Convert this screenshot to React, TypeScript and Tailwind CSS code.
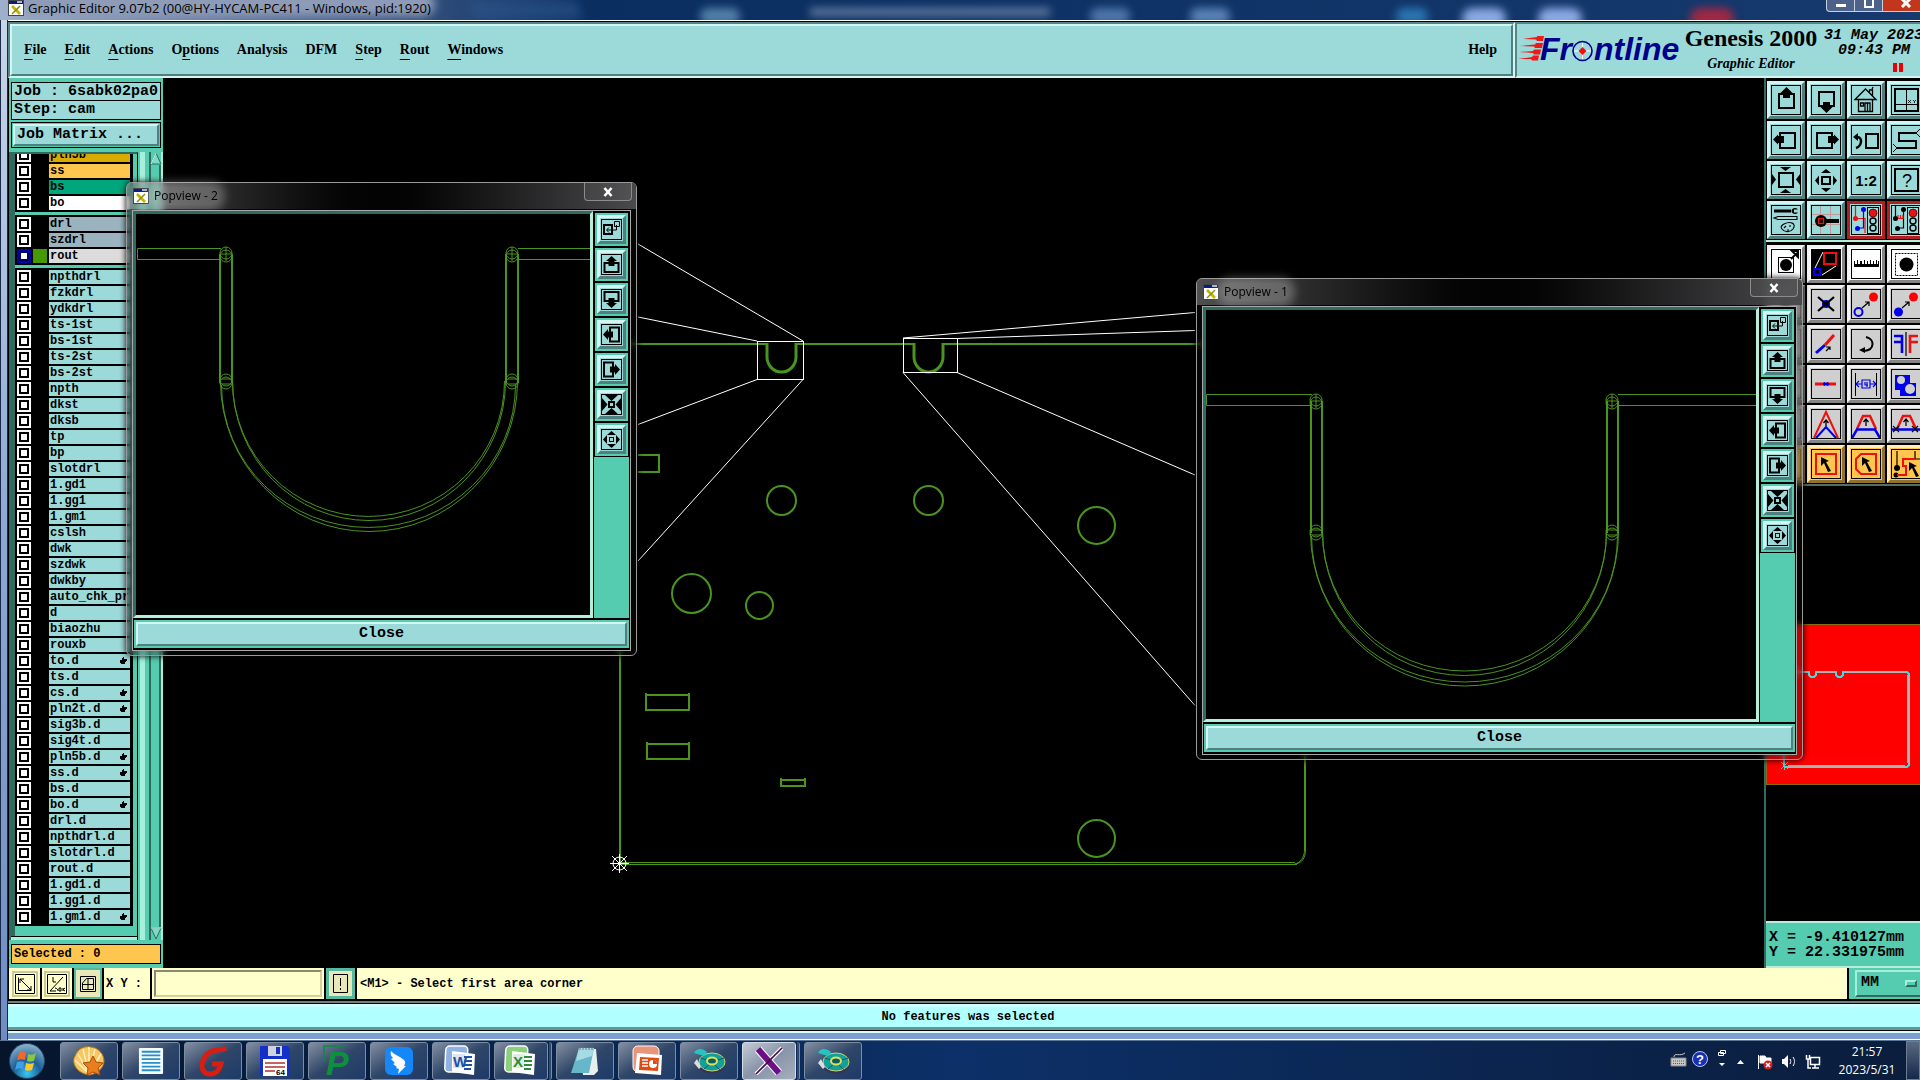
import { useState } from 'react';
import type { ReactNode } from 'react';
import clsx from 'clsx';

const RAISED = 'border-t-[#d3f5f3] border-l-[#d3f5f3] border-r-[#4f8080] border-b-[#4f8080]';
const RAISED_GRAY = 'border-t-[#f2f2f2] border-l-[#f2f2f2] border-r-[#858585] border-b-[#858585]';
const RAISED_ORANGE = 'border-t-[#ffedc2] border-l-[#ffedc2] border-r-[#94712b] border-b-[#94712b]';

const MONO = 'font-["Liberation_Mono",monospace] font-bold';
const SERIF = 'font-["Liberation_Serif",serif] font-bold';
const UI = 'font-["Open_Sans","Noto_Sans",sans-serif]';

const menus = [
  { pre: '', key: 'F', rest: 'ile' },
  { pre: '', key: 'E', rest: 'dit' },
  { pre: '', key: 'A', rest: 'ctions' },
  { pre: 'O', key: 'p', rest: 'tions' },
  { pre: 'Analysis', key: '', rest: '' },
  { pre: 'DFM', key: '', rest: '' },
  { pre: '', key: 'S', rest: 'tep' },
  { pre: '', key: 'R', rest: 'out' },
  { pre: '', key: 'W', rest: 'indows' },
];

interface Layer {
  name: string;
  color?: string;
  hand?: boolean;
  active?: boolean;
}

const plain = (names: string): Layer[] =>
  names.split(' ').map((n) => ({ name: n.replace('*', ''), hand: n.endsWith('*') }));

const layerGroups: Layer[][] = [
  [
    { name: 'pln5b', color: 'bg-[#d9ab00]' },
    { name: 'ss', color: 'bg-[#ffc64f]' },
    { name: 'bs', color: 'bg-[#00a67c]' },
    { name: 'bo', color: 'bg-white' },
  ],
  [
    { name: 'drl', color: 'bg-[#9ab3bf]' },
    { name: 'szdrl', color: 'bg-[#9ab3bf]' },
    { name: 'rout', color: 'bg-[#dcdcdc]', active: true },
  ],
  plain(
    'npthdrl fzkdrl ydkdrl ts-1st bs-1st ts-2st bs-2st npth dkst dksb tp bp slotdrl 1.gd1 1.gg1 1.gm1 cslsh dwk szdwk dwkby auto_chk_pr d biaozhu rouxb to.d* ts.d cs.d* pln2t.d* sig3b.d sig4t.d pln5b.d* ss.d* bs.d bo.d* drl.d npthdrl.d slotdrl.d rout.d 1.gd1.d 1.gg1.d 1.gm1.d*'
  ),
];

function LayerRow({ layer }: { layer: Layer }) {
  const [checked, setChecked] = useState(false);
  return (
    <li className="flex h-4 items-start">
      <label className="flex h-[14px] w-full items-start">
        <span className={clsx('ml-[2px] block size-[14px] p-[2px]', layer.active ? 'bg-[#0000a8]' : 'bg-white')}>
          <input
            type="checkbox"
            checked={checked}
            onChange={() => setChecked(!checked)}
            className={clsx(
              'block size-[10px] appearance-none border-2 bg-white',
              layer.active ? 'border-[#000058]' : 'border-black'
            )}
          />
        </span>
        <span className={clsx('ml-[2px] h-[14px] w-[14px]', layer.active && 'bg-[#449a00]')} />
        <span
          className={clsx(
            'ml-[2px] flex h-[14px] w-[81px] items-center justify-between overflow-hidden pl-px text-[12px] leading-[14px] whitespace-nowrap',
            layer.color ?? 'bg-[#9cdada]'
          )}
        >
          {layer.name}
          {layer.hand && (
            <svg width="9" height="8" viewBox="0 0 9 8" className="mr-[2px] shrink-0" aria-hidden="true">
              <path d="M4 0h1v2h3v2H7v1H6v2H2V6H1V3h2V1h1z" />
            </svg>
          )}
        </span>
      </label>
    </li>
  );
}

function AppIcon() {
  return (
    <svg width="16" height="16" viewBox="0 0 16 16" className="shrink-0" aria-hidden="true">
      <rect x="0.5" y="0.5" width="15" height="15" fill="#fff" stroke="#444" />
      <rect x="1" y="1" width="14" height="3" fill="#0a1a8c" />
      <rect x="9" y="1" width="5" height="2" fill="#9fb4e0" />
      <path d="M4 6l8 8" stroke="#c0b400" strokeWidth="2.6" />
      <path d="M12 6l-8 8" stroke="#8a8410" strokeWidth="1.4" />
    </svg>
  );
}

function FrontlineLogo() {
  return (
    <svg width="165" height="40" viewBox="0 0 165 40" className="shrink-0 overflow-visible" role="img" aria-label="Frontline">
      <path
        d="M5 4l14-2v-1h7l-1 5h-6l-1-1.500zM2 11l15-1.500 1-1.500h7l-1 5h-7l-1-1.500zM1 17l14-1 1-1.500h7l-1 5h-6l-1-1.500zM0 24l14-2 1-1.500h6l-1 5h-6l-1-1.500z"
        fill="#f01818"
      />
      <g fill="#00008b" fontFamily="Liberation Sans, sans-serif" fontWeight="bold" fontStyle="italic" fontSize="32">
        <text x="22" y="25">Fr</text>
        <text x="76" y="25">ntline</text>
      </g>
      <circle cx="64.500" cy="16" r="9.500" fill="none" stroke="#00008b" strokeWidth="1.600" />
      <path d="M64.500 8v16M56 16h17" stroke="#fff" strokeWidth="1" />
      <path d="M64.500 12l4 4-4 4-4-4z" fill="#f01010" />
    </svg>
  );
}

/* ---------- tool glyphs, drawn on a 30px grid ---------- */

const K = { fill: 'none', stroke: '#000', strokeWidth: 2 };
const R = { fill: 'none', stroke: '#ee1010', strokeWidth: 2 };
const B = { fill: 'none', stroke: '#0000ee', strokeWidth: 2 };

function Lights({ x }: { x: number }) {
  return (
    <g transform={`translate(${x} 0)`}>
      <rect x="0" y="2.500" width="11" height="26" fill="#9cdada" stroke="#000" />
      <circle cx="5.500" cy="8" r="4" fill="#ee1010" stroke="#000" strokeWidth="0.600" />
      <circle cx="5.500" cy="16" r="3" fill="none" stroke="#000" strokeWidth="1.400" />
      <circle cx="5.500" cy="23" r="3" fill="none" stroke="#000" strokeWidth="1.400" />
    </g>
  );
}

interface Tool {
  label: string;
  glyph: ReactNode;
  frame?: string;
}

const viewTools: Tool[] = [
  { label: 'Pan up', glyph: <><rect x="8" y="9" width="15" height="14" {...K} /><path d="M15.500 2l6 6h-2.500v5h-7V8H9.500z" /></> },
  { label: 'Pan down', glyph: <><rect x="8" y="7" width="15" height="14" {...K} /><path d="M15.500 28l6-6h-2.500v-5h-7v5H9.500z" /></> },
  { label: 'Home', glyph: <><path d="M4 14.500L14.500 4 25 14.500zM7.500 14.500v12h14v-12M14 26v-8h5v8M16.500 18v8M9.500 18h3v3h-3zM18.500 8V5h3v6M21 4l1-2" {...K} strokeWidth="1.300" /></> },
  { label: 'Area xy', glyph: <><rect x="4" y="4" width="23" height="22" {...K} /><path d="M15.500 4v22M4 19.500h23" {...K} strokeWidth="1" /><path d="M17 15l3 3M20 15l-3 3M22 15l1.500 1.500L25 15M23.500 16.500V18" {...K} strokeWidth="0.800" /></> },
  { label: 'Pan left', glyph: <><rect x="9" y="8" width="15" height="15" {...K} /><path d="M2 14.500l5-5V11h6v7H7v1.500z" /></> },
  { label: 'Pan right', glyph: <><rect x="6" y="8" width="15" height="15" {...K} /><path d="M28 14.500l-5-5V11h-6v7h6v1.500z" /></> },
  { label: 'Previous view', glyph: <><rect x="15" y="9" width="12" height="14" {...K} /><path d="M6 12c6 0 5 9-1 11" {...K} strokeWidth="2.500" /><path d="M2 12l5-4v8z" /></> },
  { label: 'Snake view', glyph: <><path d="M25 8H8v8h17v7H6" {...K} /><path d="M29 4l-4 4 4 4M2 19l4 4-4 4" {...K} strokeWidth="1" /></> },
  { label: 'Zoom in', glyph: <><rect x="8" y="8" width="14" height="14" {...K} /><path d="M9 2h11l-5.500 4zM9 28h11l-5.500-4zM1 9v11l4-5.500zM29 9v11l-4-5.500z" /></> },
  { label: 'Zoom out', glyph: <><rect x="11" y="12" width="8" height="7" {...K} /><path d="M10 8h10l-5-4zM10 23h10l-5 4zM8 10.500v10l-4-5zM22 10.500v10l4-5z" /></> },
  { label: 'Scale', glyph: <text x="15" y="21" textAnchor="middle" fontFamily="Liberation Sans, sans-serif" fontWeight="bold" fontSize="15">1:2</text> },
  { label: 'Help on area', glyph: <><rect x="4" y="4" width="23" height="22" {...K} /><text x="16" y="22" textAnchor="middle" fontFamily="Liberation Sans, sans-serif" fontSize="18">?</text></> },
  { label: 'Settings', glyph: <><path d="M3 6h17" {...K} strokeWidth="3" /><path d="M27 4.500a3.500 3 0 1 0 0 3h-4v-3z" /><path d="M3 13l4-1.500h19v3H7zM13 19c6-3 13-1 9 5-3 4-9 3-11 0-2-2 0-4 2-5zM13 23l2-2M19 20v2M16 25h2" {...K} strokeWidth="1.100" /></> },
  { label: 'Grid snap', glyph: <><path d="M1 9.500h28M1 19.500h28M9.500 1v28M19.500 1v28" stroke="#c09a9a" strokeWidth="1" /><circle cx="10" cy="16" r="6" /><path d="M10 16h18" {...K} strokeWidth="4" /><rect x="7.500" y="13.500" width="5" height="5" {...R} strokeWidth="1.300" /></> },
  { label: 'DRC nets', frame: 'border-[#b02020]', glyph: <><path d="M4.500 1v12.500H14V28" {...R} strokeWidth="1.200" /><path d="M12.500 5v18H7" {...B} strokeWidth="1.200" /><circle cx="12.500" cy="4.500" r="2.500" fill="#0000ee" /><circle cx="6.500" cy="23.500" r="2.500" fill="#0000ee" /><circle cx="4.500" cy="13.500" r="2.500" fill="#ee1010" /><Lights x={16.500} /></> },
  { label: 'DRC short', frame: 'border-[#b02020]', glyph: <><path d="M4.500 1v12.500M12.500 5v18H7" {...K} strokeWidth="1.200" /><path d="M7 10v3.500h5V10M9.500 10v3" {...R} strokeWidth="1.200" /><circle cx="12.500" cy="4.500" r="2.500" /><circle cx="6.500" cy="23.500" r="2.500" /><circle cx="4.500" cy="13.500" r="2.500" /><Lights x={16.500} /></> },
];

const arrow = 'M0 0l8 4-3 1 5 9-3 1-4-9-3 3z';

const editTools: (Tool & { tone: 'white' | 'gray' | 'orange' })[] = [
  { tone: 'white', label: 'Select feature', glyph: <><rect x="7.500" y="8.500" width="15" height="15" {...K} strokeWidth="1" /><circle cx="15" cy="16" r="6" /><path d="M20 10l6-6M27 2v6l-6-6z" {...K} /></> },
  { tone: 'white', label: 'Popup view', glyph: <><rect width="30" height="30" /><path d="M4 19L12 3M11 26l14-9" stroke="#fff" strokeWidth="1" /><rect x="13" y="4" width="12" height="11" {...R} /><rect x="3" y="20" width="6" height="6" {...B} /></> },
  { tone: 'white', label: 'Measure', glyph: <path d="M3 18h25v-6h-1v3h-1v-4h-1v4h-2v-3h-1v3h-2v-4h-1v4h-2v-3h-1v3h-2v-4h-1v4h-2v-3H9v3H7v-4H6v4H4v-3H3z" /> },
  { tone: 'white', label: 'Select area', glyph: <><rect x="4.500" y="4.500" width="22" height="22" {...K} strokeWidth="1" strokeDasharray="2 1" /><circle cx="15.500" cy="15.500" r="7" /></> },
  { tone: 'gray', label: 'Add', glyph: <circle cx="15" cy="15" r="5" fill="#ee1010" /> },
  { tone: 'gray', label: 'Delete', glyph: <><circle cx="15" cy="15" r="4" fill="#0000cc" /><path d="M7 8l16 14M23 8L7 22" {...K} strokeWidth="2.200" /></> },
  { tone: 'gray', label: 'Move', glyph: <><circle cx="7.500" cy="23" r="4" {...B} /><circle cx="22.500" cy="8" r="4.500" fill="#ff0000" /><path d="M11 19l7-6M18 17v-4h-4" {...K} strokeWidth="1.200" /></> },
  { tone: 'gray', label: 'Copy', glyph: <><circle cx="7.500" cy="23" r="4.500" fill="#0000ee" /><circle cx="22.500" cy="8" r="4.500" fill="#ff0000" /><path d="M11 19l7-6M18 17v-4h-4" {...K} strokeWidth="1.200" /></> },
  { tone: 'gray', label: 'Resize', glyph: <path d="M5 15h20" {...B} /> },
  { tone: 'gray', label: 'Stretch', glyph: <><path d="M5 24l9-8" {...B} strokeWidth="3" /><path d="M14 16l9-10" {...R} strokeWidth="3" /><path d="M15 22l4-4M19 21v-3h-4" {...K} strokeWidth="1.200" /></> },
  { tone: 'gray', label: 'Rotate', glyph: <><path d="M15 8c9 2 9 13-2 14" {...K} strokeWidth="2" /><path d="M8 21l6-3v6z" /></> },
  { tone: 'gray', label: 'Mirror', glyph: <><path d="M3 7h8v17M3 13h8" {...B} strokeWidth="2.600" /><path d="M27 7h-8v17M27 13h-8" {...R} strokeWidth="2.600" /><path d="M15 3v24" {...K} strokeWidth="1.200" /></> },
  { tone: 'gray', label: 'Break', glyph: <path d="M5 15h20" {...B} /> },
  { tone: 'gray', label: 'Join', glyph: <><path d="M4 15h21" {...R} strokeWidth="3" /><path d="M12 15h6" {...B} strokeWidth="2.500" /><path d="M13 13l4 4M17 13l-4 4" {...B} strokeWidth="0.800" /></> },
  { tone: 'gray', label: 'Spacing', glyph: <><path d="M4.500 4v23M25.500 4v23" {...K} strokeWidth="1" /><path d="M11 11h8v8h-8zM5 15h6M19 15h6M8 12l-3 3 3 3M22 12l3 3-3 3M14 13v3h3M16 13v5" {...B} strokeWidth="1.200" /></> },
  { tone: 'gray', label: 'Merge shapes', glyph: <><path d="M4 6h15v8h6v13H9v-6H4z" fill="#0000ee" /><circle cx="10" cy="11" r="4" fill="#cfcfcf" /><circle cx="19" cy="20" r="5" fill="#cfcfcf" /></> },
  { tone: 'gray', label: 'Curve', glyph: <path d="M5 24L15 6l10 18" {...B} /> },
  { tone: 'gray', label: 'Move vertex', glyph: <><path d="M3 29L15 3l12 26" {...R} /><path d="M5 29l10-11 10 11" {...B} /><path d="M15 17v-5M12.500 14l2.500-3 2.500 3" {...K} strokeWidth="1.300" /></> },
  { tone: 'gray', label: 'Move segment', glyph: <><path d="M6 20l6-13h7l6 13" {...R} strokeWidth="2.500" /><path d="M1 29l5-8.500h18l5 8.500" {...B} strokeWidth="2.500" /><path d="M15 17v-6M12.500 13l2.500-3 2.500 3" {...K} strokeWidth="1.300" /></> },
  { tone: 'gray', label: 'Move parallel', glyph: <><path d="M6 20l6-13h7l6 13" {...R} strokeWidth="2.500" /><path d="M1 20.500h28" {...B} strokeWidth="2.500" /><path d="M15 17v-6M12.500 13l2.500-3 2.500 3M2 17l6 6M8 17l-6 6M21 17l6 6M27 17l-6 6" {...K} strokeWidth="1.200" /></> },
  { tone: 'orange', label: 'Select single', glyph: <path d={arrow} transform="translate(10 8)" /> },
  { tone: 'orange', label: 'Select frame', glyph: <><rect x="5" y="5" width="20" height="20" {...R} /><path d={arrow} transform="translate(10 8)" /></> },
  { tone: 'orange', label: 'Select polygon', glyph: <><path d="M10 5h15v20H10l-5-5V10z" {...R} /><path d={arrow} transform="translate(11 8)" /></> },
  { tone: 'orange', label: 'Select net', glyph: <><path d="M6 2v16M24 2v8h5" {...K} strokeWidth="1.200" /><circle cx="6" cy="19" r="3" /><circle cx="5" cy="26" r="2.500" /><path d="M6 26h9v-9h-3v-7h12" {...R} /><path d={arrow} transform="translate(18 13)" /></> },
];

const tones = {
  white: `bg-white ${RAISED_GRAY}`,
  gray: `bg-[#cfcfcf] ${RAISED_GRAY}`,
  orange: `bg-[#ffc64f] ${RAISED_ORANGE}`,
};

function ToolButton({ tool, tone }: { tool: Tool; tone: string }) {
  return (
    <button type="button" aria-label={tool.label} className={clsx('size-[38px] border-[3px] p-px', tone)}>
      <svg width="30" height="30" viewBox="0 0 30 30" aria-hidden="true">
        {tool.glyph}
        <rect x="0.500" y="0.500" width="29" height="29" fill="none" stroke="#000" />
      </svg>
    </button>
  );
}

/* ---------- popview windows ---------- */

const popTools: Tool[] = [
  { label: 'Source area', glyph: <><rect x="3" y="6" width="8" height="9" {...K} /><path d="M13.500 2.500h5v5h-5zM15.500 6v5H6M8 8.500L5.500 11 8 13.500" {...K} strokeWidth="1" /></> },
  { label: 'Pan up', glyph: <><path d="M8 9H3.500v9h14V9H13" {...K} /><path d="M10.500 2l5.500 5h-2.500v5h-6V7H5z" /></> },
  { label: 'Pan down', glyph: <><path d="M8 12H3.500V3h14v9H13" {...K} /><path d="M10.500 19l5.500-5h-2.500V9h-6v5H5z" /></> },
  { label: 'Pan left', glyph: <><path d="M9 8V3.500h9v14H9V13" {...K} /><path d="M2 10.500L7 5v2.500h5v6H7V16z" /></> },
  { label: 'Pan right', glyph: <><path d="M12 8V3.500H3v14h9V13" {...K} /><path d="M19 10.500L14 5v2.500H9v6h5V16z" /></> },
  { label: 'Zoom in', glyph: <><rect x="8" y="8" width="5" height="5" {...K} /><path d="M4 1h13l-6.500 6zM4 20h13l-6.500-6zM1 4v13l5.500-6.500zM20 4v13l-5.500-6.500z" /></> },
  { label: 'Zoom out', glyph: <><rect x="8.500" y="8.500" width="4" height="4" {...K} strokeWidth="1" /><path d="M6 6h9l-4.500-4zM6 15h9l-4.500 4zM6 6v9l-4-4.500zM15 6v9l4-4.500z" /></> },
];

function Popview({ title, place, children }: { title: string; place: string; children: ReactNode }) {
  return (
    <section
      className={clsx(
        'absolute flex flex-col rounded-[6px] border border-[#9a9a9a] bg-[#101214]/30 px-[5px] pb-1 shadow-[0_0_6px_#000] backdrop-blur-[3px]',
        place
      )}
    >
      <div className="absolute inset-x-0 top-0 h-[26px] rounded-t-[5px] bg-linear-to-r from-white/30 via-black/40 to-[#4a4a4c]" />
      <header className="relative flex h-[27px] shrink-0 items-start justify-between">
        <div className="flex items-center gap-1 pt-1 pl-px">
          <AppIcon />
          <h2 className={clsx(UI, 'rounded-lg bg-white/25 px-px text-[12px] leading-[18px] text-black shadow-[0_0_8px_6px_rgba(255,255,255,0.25)]')}>
            {title}
          </h2>
        </div>
        <button
          type="button"
          aria-label={`Close ${title}`}
          className="-mr-px flex h-[18px] w-12 items-center justify-center rounded-b-[4px] border border-t-0 border-[#8c8c8c] bg-white/5"
        >
          <svg width="12" height="10" viewBox="0 0 12 10" aria-hidden="true">
            <path d="M2 1l8 8M10 1L2 9" stroke="#555" strokeWidth="4" />
            <path d="M2.500 1l7 8M9.500 1l-7 8" stroke="#fff" strokeWidth="2.500" />
          </svg>
        </button>
      </header>
      <div className="relative flex min-h-0 flex-1 flex-col gap-[2px] border border-[#a8a8a8] bg-black pr-px">
        <div className="flex min-h-0 flex-1 gap-px">
          <div className="min-w-0 flex-1 border-[3px] border-t-[#2f6b5e] border-r-[#b5efdc] border-b-[#b5efdc] border-l-[#2f6b5e]">
            {children}
          </div>
          <div className="flex w-[35px] shrink-0 flex-col border-t border-black bg-[#55ccaf]">
            {popTools.map((tool) => (
              <div key={tool.label} className="border border-black">
                <button
                  type="button"
                  aria-label={tool.label}
                  className="block size-[33px] border-2 border-[#55ccaf]"
                >
                  <span className={clsx('block size-[29px] border-[3px] bg-[#9cdada] p-px', RAISED)}>
                    <svg width="21" height="21" viewBox="0 0 21 21" aria-hidden="true">
                      {tool.glyph}
                      <rect x="0.500" y="0.500" width="20" height="20" fill="none" stroke="#000" />
                    </svg>
                  </span>
                </button>
              </div>
            ))}
          </div>
        </div>
        <button type="button" className="ml-px mb-[2px] h-7 shrink-0 border-2 border-[#55ccaf]">
          <span className={clsx(MONO, 'flex h-full items-center justify-center border-2 bg-[#9cdada] text-[15px] leading-4', RAISED)}>
            Close
          </span>
        </button>
      </div>
    </section>
  );
}

function RoutNode({ x, y, cross }: { x: number; y: number; cross?: boolean }) {
  return (
    <g>
      <circle cx={x} cy={y - 1} r="6" />
      <circle cx={x} cy={y + 2} r="6" />
      {cross ? <path d={`M${x} ${y - 7}v14M${x - 6} ${y}h12`} /> : <path d={`M${x - 4} ${y - 2}h9M${x - 4} ${y + 3}h9`} />}
    </g>
  );
}

function WorkCanvas() {
  return (
    <svg width="1602" height="889" viewBox="163 78 1602 889" className="block max-w-none" role="img" aria-label="Board outline">
      <g fill="none" stroke="#4a9420" strokeWidth="2">
        <path d="M620 344h146M796 344h118M944 344h360M620 344v519" />
        <path d="M767 343v14a14.500 15 0 0 0 29 0v-14M914 343v14a14.500 15 0 0 0 29 0v-14" strokeWidth="3" />
        <path d="M638 455h21v17h-21" />
        <circle cx="781.500" cy="500.500" r="14.500" />
        <circle cx="928.500" cy="500.500" r="14.500" />
        <circle cx="1096.500" cy="525.500" r="18.500" />
        <circle cx="691.500" cy="593.500" r="19.500" />
        <circle cx="759.500" cy="605.500" r="13.500" />
        <circle cx="1096.500" cy="838.500" r="18.500" />
        <path d="M646 693v17h43v-17M645 695h45M647 742v17h42v-17M646 744h44M781 778v8h24v-8M780 780h25" />
        <path d="M620 862.500h675M620 864.500h677M1304.500 344v506c0 7-4 13-10 14" strokeWidth="1" />
        <path d="M1305.500 344v506c0 7-3 13-10 14" strokeWidth="1" />
      </g>
      <g fill="none" stroke="#fff" strokeWidth="1">
        <rect x="757.500" y="341.500" width="46" height="38" />
        <rect x="903.500" y="338.500" width="54" height="34" />
        <path d="M638 244l165 97M638 317l119 24M638 424.500l119-45M638 561l165-181.500" />
        <path d="M903 338l292-25.500M957 338.500l238-8M957 372.500l238 102.500M903 372.500l292 333" />
        <path d="M610 863.500h19M619.500 854v19M612 856l15 15M627 856l-15 15" />
        <circle cx="619.500" cy="863.500" r="6.500" />
      </g>
    </svg>
  );
}

/* ---------- taskbar ---------- */

function Disc() {
  return (
    <svg width="36" height="30" viewBox="0 0 36 30" aria-hidden="true">
      <ellipse cx="21" cy="19" rx="13" ry="9" fill="#35325c" />
      <ellipse cx="21" cy="16" rx="13" ry="9" fill="#12a09c" stroke="#c8d86a" strokeWidth="1" />
      <path d="M21 16L10 12M21 16l12-4M21 16l8 8M21 16l-8 7" stroke="#0c5c66" />
      <ellipse cx="21" cy="15" rx="5" ry="3.500" fill="#0b5f5a" stroke="#e3df58" strokeWidth="2" />
      <path d="M3 7c3-6 9-4 13-1l-3 4z" fill="#26c4c0" />
      <path d="M3 17l3-4 4 8-2 2z" fill="#ddd" />
    </svg>
  );
}

function OfficeIcon({ letter, color, back }: { letter: string; color: string; back: string }) {
  return (
    <svg width="34" height="32" viewBox="0 0 34 32" aria-hidden="true">
      <rect x="2" y="1" width="22" height="26" rx="4" fill={back} stroke="#fff" strokeWidth="1.500" transform="skewX(-3)" />
      <path d="M8 6l23 3-1 21-22-3z" fill="#fff" />
      <path d="M20 12h8M20 16h8M20 20h8M20 24h7" stroke={color} strokeWidth="2" />
      <rect x="9" y="9" width="12" height="14" fill={color} opacity="0.15" />
      <text x="9" y="22" fontFamily="Liberation Sans, sans-serif" fontWeight="bold" fontSize="15" fill={color}>{letter}</text>
    </svg>
  );
}

const tasks: { name: string; icon: ReactNode; stacked?: boolean; active?: boolean }[] = [
  {
    name: 'Shell',
    icon: (
      <svg width="34" height="30" viewBox="0 0 34 30" aria-hidden="true">
        <path d="M17 29C4 27-1 16 3 10 6 2 13 0 18 1c8 0 14 7 14 14 0 6-6 13-15 14z" fill="#f6c660" stroke="#b9741c" />
        <path d="M17 28L6 8M17 28L11 3M17 28V1M17 28l6-25M17 28L29 8M17 28L3 14" stroke="#fff0c0" strokeWidth="1.500" />
        <path d="M21 10l3 6 7 1-5 5 2 7-7-3-6 3 1-7-5-5 7-1z" fill="#ea7d1c" stroke="#a84c0a" />
      </svg>
    ),
  },
  {
    name: 'Documents',
    icon: (
      <svg width="26" height="28" viewBox="0 0 28 30" aria-hidden="true">
        <rect x="1" y="1" width="26" height="28" rx="1" fill="#f2fbff" />
        <path d="M4 5h20M4 9h20M4 13h20M4 17h20M4 21h20M4 25h20" stroke="#2c8fc4" strokeWidth="2" />
      </svg>
    ),
  },
  {
    name: 'Genesis',
    icon: (
      <svg width="32" height="32" viewBox="0 0 32 32" aria-hidden="true">
        <path d="M29 3c-3 2-6 2-9 2C13 6 8 9 6 16c-3 8 1 13 7 13 6 0 9-3 11-10H15" fill="none" stroke="#d81e12" strokeWidth="5" />
      </svg>
    ),
  },
  {
    name: 'Total Commander',
    icon: (
      <svg width="32" height="32" viewBox="0 0 32 32" aria-hidden="true">
        <path d="M1 1h28l2 3v27H1z" fill="#1430c8" />
        <rect x="9" y="1" width="14" height="10" fill="#cfd4dc" />
        <rect x="17" y="2" width="4" height="7" fill="#1430c8" />
        <rect x="4" y="14" width="24" height="17" fill="#fff" />
        <path d="M6 18h20M6 22h20M6 26h10" stroke="#b03030" strokeWidth="1.500" />
        <text x="17" y="30" fontFamily="Liberation Sans, sans-serif" fontSize="8" fontWeight="bold">64</text>
      </svg>
    ),
  },
  {
    name: 'Planner',
    icon: (
      <svg width="34" height="32" viewBox="0 0 34 32" aria-hidden="true">
        <path d="M4 16V1h22" fill="none" stroke="#0d8b3f" strokeWidth="1.500" />
        <text x="6" y="30" fontFamily="Liberation Sans, sans-serif" fontSize="34" fontWeight="bold" fontStyle="italic" fill="#0d8f3c">P</text>
      </svg>
    ),
  },
  {
    name: 'DingTalk',
    icon: (
      <svg width="30" height="30" viewBox="0 0 30 30" aria-hidden="true">
        <rect x="1" y="1" width="28" height="28" rx="6" fill="#1488f8" />
        <path d="M7 5c3 4 9 5 13 9 2 2 1 4 0 6h2l-8 8 1-5-3-1 1-1-4-3 2-1-4-4 2-1c-2-2-3-4-2-7z" fill="#fff" />
      </svg>
    ),
  },
  { name: 'Word', icon: <OfficeIcon letter="W" color="#2350a0" back="#8fb2e2" /> },
  { name: 'Excel', icon: <OfficeIcon letter="X" color="#2e8b3a" back="#8ccf7c" />, stacked: true },
  {
    name: 'Notepad',
    icon: (
      <svg width="32" height="32" viewBox="0 0 32 32" aria-hidden="true">
        <path d="M10 4h17l2 22-4 4H14z" fill="#e6eeee" />
        <path d="M10 3h15L20 28H2z" fill="#66b7c9" />
        <path d="M10 3h15l-2 8-16 5z" fill="#a5dbe4" />
        <path d="M11 2v3M14 2v3M17 2v3M20 2v3M23 2v3" stroke="#777" />
      </svg>
    ),
  },
  {
    name: 'PowerPoint',
    icon: (
      <svg width="34" height="32" viewBox="0 0 34 32" aria-hidden="true">
        <rect x="3" y="1" width="26" height="26" rx="5" fill="#e9937a" stroke="#fff" />
        <path d="M7 8l25 2-1 20-26-2z" fill="#fff" />
        <path d="M10 12l19 1-1 13-19-1z" fill="#dc4c14" />
        <path d="M12 15h6M12 18h6M12 21h6" stroke="#fff" strokeWidth="1.500" />
        <circle cx="23" cy="19" r="4" fill="#fff" />
        <path d="M23 19v-4a4 4 0 0 1 4 4z" fill="#dc4c14" />
      </svg>
    ),
  },
  { name: 'Genesis job', icon: <Disc /> },
  {
    name: 'Xming',
    active: true,
    stacked: true,
    icon: (
      <svg width="32" height="28" viewBox="0 0 32 28" aria-hidden="true">
        <path d="M5 2l21 24" stroke="#fff" strokeWidth="8" />
        <path d="M29 1L3 27" stroke="#fff" strokeWidth="4" />
        <path d="M5 2l21 24" stroke="#6b0f86" strokeWidth="6" />
        <path d="M29 1L3 27" stroke="#43084f" strokeWidth="1.600" />
      </svg>
    ),
  },
  { name: 'Genesis tools', icon: <Disc /> },
];

function Taskbar() {
  return (
    <footer className="flex h-10 shrink-0 items-center border-t border-[#5d7690] bg-linear-to-r from-[#06152c] via-[#0c3068] to-[#0a1d3c]">
      <button type="button" aria-label="Start" className="flex w-[60px] shrink-0 justify-center pr-[6px]">
        <svg width="38" height="38" viewBox="0 0 38 38" aria-hidden="true">
          <defs>
            <radialGradient id="orb" cx="50%" cy="85%" r="85%">
              <stop offset="0" stopColor="#38c8f4" />
              <stop offset="0.450" stopColor="#1c5f96" />
              <stop offset="1" stopColor="#8fb6cc" />
            </radialGradient>
          </defs>
          <circle cx="19" cy="19" r="17.500" fill="url(#orb)" stroke="#1d4468" />
          <path d="M11 11c3-2 5-1 7 0l-1 7c-3-1-5-1-8 0z" fill="#f2672c" />
          <path d="M20 12c3 1 5 1 8-1l-2 8c-3 1-5 1-7 0z" fill="#8cc63e" />
          <path d="M9 20c3-1 5-1 7 0l-1 7c-3-1-5-1-8 1z" fill="#3f9fe8" />
          <path d="M18 21c3 1 5 1 8 0l-2 7c-3 1-5 1-7 0z" fill="#fcc82c" />
        </svg>
      </button>
      <nav aria-label="Open programs" className="flex gap-1">
        {tasks.map((task) => (
          <button
            key={task.name}
            type="button"
            aria-label={task.name}
            className="flex h-[38px] w-[58px] gap-px"
          >
            <span
              className={clsx(
                'flex h-full flex-1 items-center justify-center rounded-[3px] border bg-linear-to-br',
                task.active
                  ? 'border-[#d6dde6] from-[#c3cbd6] via-[#8894a8] to-[#a5afbe]'
                  : 'border-[#7c8ca2] from-[#8590a2] via-[#2f4668] to-[#1d3a68]'
              )}
            >
              {task.icon}
            </span>
            {task.stacked && <span className="h-full w-[3px] rounded-r-[3px] border-r border-[#7c8ca2] bg-[#33486a]" />}
          </button>
        ))}
      </nav>
      <div className="ml-auto flex h-full items-center gap-3 pl-2">
        <svg width="156" height="24" viewBox="1669 1048 156 24" aria-hidden="true" className="shrink-0">
          <path d="M1672 1057h15v8h-15z" fill="#c8c8c8" stroke="#888" />
          <path d="M1675 1056c0-5 6 0 11-4" fill="none" stroke="#c8c8c8" />
          <path d="M1674 1060h11M1674 1062.500h11" stroke="#555" strokeDasharray="1 1" />
          <circle cx="1701" cy="1058" r="7.500" fill="#1a30b4" stroke="#b8c4ee" />
          <text x="1701" y="1063" textAnchor="middle" fontFamily="Liberation Sans, sans-serif" fontWeight="bold" fontSize="13" fill="#fff">?</text>
          <path d="M1721.500 1049.500h5v3h-5zM1719.500 1051.500h5v3h-5z" fill="none" stroke="#fff" />
          <path d="M1720 1062h6l-3 3zM1738 1063h7l-3.500-4z" fill="#fff" />
          <path d="M1759.500 1054v14M1761 1055h5l1 2h5v6h-5l-1-1h-5z" stroke="#fff" fill="#fff" />
          <circle cx="1769" cy="1064" r="4.500" fill="#d42020" />
          <path d="M1767 1062l4 4M1771 1062l-4 4" stroke="#fff" strokeWidth="1.500" />
          <path d="M1783 1058h2l4-4v13l-4-4h-2z" fill="#fff" />
          <path d="M1791 1058c1 2 1 3 0 5M1794 1056c2 3 2 6 0 9" stroke="#fff" fill="none" />
          <path d="M1811.500 1056.500h9v7h-9zM1813 1067h7M1816 1064v3M1807.500 1054v4h3v-4M1809 1058v9h3" stroke="#fff" fill="none" strokeWidth="1.500" />
        </svg>
        <div className={clsx(UI, 'w-[62px] text-center text-[12px] leading-[18px] text-white')}>
          <div>21:57</div>
          <div>2023/5/31</div>
        </div>
        <button type="button" aria-label="Show desktop" className="-ml-1 h-full w-[14px] border border-[#6c7c92] bg-linear-to-b from-[#5a6a80] to-[#14284a]" />
      </div>
    </footer>
  );
}

export default function App() {
  const [coords, setCoords] = useState('');

  return (
    <div className="relative flex h-screen w-full flex-col overflow-hidden bg-[#0b2a55] text-black">
      {/* Title bar over the blurred wallpaper */}
      <div className="relative flex h-5 shrink-0 items-start justify-between overflow-hidden bg-linear-to-r from-[#9fb0cc] from-0% via-[#0b2e60] via-30% to-[#16396e]">
        <div className="absolute -top-2 left-[20px] h-6 w-[415px] rounded-full bg-[#8f9cb8] blur-[5px]" />
        <div className="absolute top-0 left-[470px] h-5 w-[110px] skew-x-12 bg-[#2c568c]/60 blur-[5px]" />
        <div className="absolute top-2 left-[700px] h-4 w-10 rounded-full bg-[#6fa3c8]/70 blur-[4px]" />
        <div className="absolute top-2 left-[810px] h-2 w-[240px] bg-[#b3c4dc]/50 blur-[4px]" />
        <div className="absolute top-2 left-[1090px] h-4 w-10 rounded-full bg-[#78a4d8]/60 blur-[4px]" />
        <div className="absolute top-2 left-[1190px] h-4 w-10 rounded-full bg-[#78a4d8]/70 blur-[4px]" />
        <div className="absolute top-2 left-[1396px] h-4 w-8 rounded-full bg-[#2f86c4]/80 blur-[4px]" />
        <div className="absolute top-2 left-[1462px] h-5 w-11 rounded-full bg-[#8aa9e4] blur-[4px]" />
        <div className="absolute top-2 left-[1538px] h-5 w-11 rounded-full bg-[#8aa9e4] blur-[4px]" />
        <div className="absolute top-2 left-[1690px] h-5 w-11 rounded-full bg-[#a02844] blur-[4px]" />
        <div className="relative flex items-center gap-1 pl-2">
          <AppIcon />
          <h1 className={clsx(UI, 'text-[13px] leading-4 whitespace-nowrap')}>
            Graphic Editor 9.07b2 (00@HY-HYCAM-PC411 - Windows, pid:1920)
          </h1>
        </div>
        <div className="relative flex h-3 overflow-hidden rounded-bl-[4px] border-b border-l border-[#c6d0de] bg-[#4d628a]">
          <button type="button" aria-label="Minimize" className="flex w-7 items-center justify-center border-r border-[#c6d0de]">
            <span className="block h-[3px] w-[10px] bg-white" />
          </button>
          <button type="button" aria-label="Maximize" className="flex w-7 items-start justify-center border-r border-[#c6d0de]">
            <span className="block h-2 w-[10px] border-2 border-t-0 border-white" />
          </button>
          <button type="button" aria-label="Close window" className="flex w-[37px] items-start justify-center bg-[#c2361c] pl-2">
            <svg width="12" height="8" viewBox="0 0 12 8" aria-hidden="true">
              <path d="M2 7l8-8M10 7L2-1" stroke="#fff" strokeWidth="3" />
            </svg>
          </button>
        </div>
      </div>

      {/* Window frame */}
      <div className="flex min-h-0 flex-1">
        <div className="w-2 shrink-0 border-x border-[#1a2a48] bg-linear-to-b from-[#c9d6e8] via-[#8ea8d4] to-[#6f8dc4]" />
        <main className="flex min-w-0 flex-1 flex-col border-t border-white bg-black">
          {/* Menu bar and branding */}
          <div className="mt-px flex h-14 shrink-0 bg-[#9cdada]">
            <nav
              aria-label="Main menu"
              className="flex min-w-0 flex-1 border-2 border-t-[#568585] border-r-[#d3f5f3] border-b-[#d3f5f3] border-l-[#568585]"
            >
              <div className={clsx(SERIF, 'flex flex-1 items-center gap-[18px] border-2 px-3 text-[14px] leading-4', RAISED)}>
                {menus.map((m) => (
                  <button key={m.pre + m.key + m.rest} type="button" className="whitespace-nowrap">
                    {m.pre}
                    {m.key && <span className="underline decoration-1 underline-offset-[5px]">{m.key}</span>}
                    {m.rest}
                  </button>
                ))}
                <button type="button" className="mr-[2px] ml-auto">
                  Help
                </button>
              </div>
            </nav>
            <div className="flex w-[405px] shrink-0 border-2 border-r-0 border-t-[#568585] border-b-[#d3f5f3] border-l-[#568585] pl-px">
              <div className="pt-[11px]">
                <FrontlineLogo />
              </div>
              <div className={clsx(SERIF, 'w-[136px] shrink-0 text-center whitespace-nowrap')}>
                <div className="text-[24px] leading-7">Genesis 2000</div>
                <div className="pt-1 text-[14px] leading-4 italic">Graphic Editor</div>
              </div>
              <div className={clsx(MONO, 'ml-[5px] w-[99px] shrink-0 pt-1 text-[15px] leading-[15px] italic')}>
                <div className="whitespace-nowrap">31 May 2023</div>
                <div className="pl-[14px]">09:43 PM</div>
                <div className="flex justify-end gap-[2px] pt-[5px] pr-[20px]">
                  <span className="h-[9px] w-1 bg-[#ee0000]" />
                  <span className="h-[9px] w-1 bg-[#ee0000]" />
                </div>
              </div>
            </div>
          </div>

          {/* Work area */}
          <div className="flex min-h-0 flex-1">
            <aside className={clsx(MONO, 'flex w-[155px] shrink-0 flex-col border-l border-black bg-[#55ccaf] pt-1 text-[15px]')}>
              <div className="mx-[2px] border border-black bg-[#9cdada]">
                <div className="h-[18px] border-b border-black pl-[2px] leading-[18px] whitespace-nowrap">Job : 6sabk02pa0</div>
                <div className="h-[18px] pl-[2px] leading-[18px] whitespace-pre">Step: cam</div>
              </div>
              <div className="mx-[2px] mt-[2px] border border-black p-px">
                <button type="button" className={clsx('block h-[22px] w-full border-2 bg-[#9cdada] pl-[2px] text-left leading-[18px]', RAISED)}>
                  Job Matrix ...
                </button>
              </div>
              <div className="mt-1 flex min-h-0 flex-1">
                <div className="flex w-[129px] flex-col border-t-2 border-r border-l-[6px] border-t-[#2f6b5e] border-r-black border-l-[#2f6b5e]">
                  <div className="min-h-0 flex-1 overflow-hidden">
                    <div className="-mt-1.5">
                      {layerGroups.map((group, i) => (
                        <ul key={i} className={clsx('w-[118px] bg-black', i > 0 && 'mt-[3px] pt-[2px]')}>
                          {group.map((layer) => (
                            <LayerRow key={layer.name} layer={layer} />
                          ))}
                        </ul>
                      ))}
                    </div>
                  </div>
                  <div className="-ml-1 h-[4px] border-t border-t-black bg-[#a5efdb]" />
                </div>
                <div className="ml-[2px] w-[5px] bg-[#a5efdb]" />
                <div className="ml-1 flex w-[14px] flex-col items-center border-r-2 border-l-2 border-r-[#a5efdb] border-l-[#2f6b5e] bg-[#55ccaf]">
                  <svg width="12" height="13" viewBox="0 0 12 13" aria-hidden="true">
                    <path d="M6 1l5 11H1z" fill="#7bdcc6" stroke="#2f6b5e" />
                    <path d="M6 1L1 12" stroke="#d3f5f3" />
                  </svg>
                  <div className="w-full flex-1 border-r-2 border-r-[#2f6b5e]" />
                  <svg width="12" height="13" viewBox="0 0 12 13" aria-hidden="true">
                    <path d="M1 1h10L6 12z" fill="#7bdcc6" stroke="#2f6b5e" />
                    <path d="M1 1h10" stroke="#d3f5f3" />
                  </svg>
                </div>
              </div>
              <div className="mx-[2px] mt-1 mb-1 h-5 border border-black bg-[#ffc64f] pl-[2px] text-[12px] leading-[18px]">
                Selected : 0
              </div>
            </aside>

            <div className="min-w-0 flex-1 overflow-hidden">
              <WorkCanvas />
            </div>

            <aside className="flex w-[156px] shrink-0 flex-col overflow-hidden border-l-2 border-[#336b60]">
              <div className="w-[164px] pt-[3px]">
                <div className="grid grid-cols-[repeat(4,38px)] gap-[2px] pl-px">
                  {viewTools.map((t) => (
                    <ToolButton key={t.label} tool={t} tone={t.frame ? `bg-[#9cdada] ${t.frame}` : `bg-[#9cdada] ${RAISED}`} />
                  ))}
                </div>
                <div className="mt-px mb-[3px] h-[2px] bg-[#b5efdc]" />
                <div className="grid grid-cols-[repeat(4,38px)] gap-[2px] border-b-2 border-[#4f7066] pb-px pl-px">
                  {editTools.map((t) => (
                    <ToolButton key={t.label} tool={t} tone={tones[t.tone]} />
                  ))}
                </div>
              </div>
              <svg width="154" height="161" viewBox="1766 624 154 161" className="mt-auto shrink-0" role="img" aria-label="Panel overview">
                <rect x="1766.500" y="624.500" width="160" height="160" fill="#f00" stroke="#8a6a10" />
                <path d="M1784 766v-94h25v3l2 2h3l2-2v-3h20v3l2 2h3l2-2v-3h64l2 2v91l-2 2h-123" fill="none" stroke="#44dde4" strokeWidth="2" />
                <path d="M1784 672h24M1817 672h18M1845 672h61M1908 675v88M1788 766h117" stroke="#b0b4b6" strokeWidth="2" />
                <path d="M1781 762l7 7M1788 762l-7 7M1784.500 761v9" stroke="#44dde4" />
              </svg>
              <div className={clsx(MONO, 'mt-[136px] h-[47px] shrink-0 border-y-2 border-[#b5efdc] bg-[#55ccaf] pt-[7px] pl-[3px] text-[15px] leading-[15px] whitespace-pre')}>
                <div>X = -9.410127mm</div>
                <div>Y = 22.331975mm</div>
              </div>
            </aside>
          </div>

          {/* Command line */}
          <div className={clsx(MONO, 'flex h-[33px] shrink-0 gap-[2px] pb-[2px] pl-px text-[12px]')}>
            <button type="button" aria-label="Snap to point" className="flex w-[31px] items-center justify-center bg-[#ffffcc]">
              <svg width="26" height="26" viewBox="0 0 26 26" aria-hidden="true">
                <rect x="1" y="1" width="24" height="24" fill="none" stroke="#c9c99a" strokeWidth="2" />
                <path d="M3.500 3.500h19v19h-19zM6.500 6.500v13h13M8 8l11 11M8 12V8h4M15 19h4v-4" fill="none" stroke="#000" />
              </svg>
            </button>
            <button type="button" aria-label="Angle lock" className="flex w-[30px] items-center justify-center bg-[#ffffcc]">
              <svg width="26" height="26" viewBox="0 0 26 26" aria-hidden="true">
                <rect x="1" y="1" width="24" height="24" fill="none" stroke="#c9c99a" strokeWidth="2" />
                <path d="M3.500 3.500h19v19h-19zM6 20L19 6M6 20h6M9 6v5h3M11 17c2 0 3 2 3 3M15 17h2v3h-2zM19 17v3M21 17l-2 1.500 2 1.500" fill="none" stroke="#000" />
              </svg>
            </button>
            <button type="button" aria-label="Grid" className="flex w-7 items-center justify-center border-2 border-[#55b89f] bg-[#e8e8b8]">
              <svg width="20" height="20" viewBox="0 0 20 20" aria-hidden="true">
                <path d="M2.500 2.500h15v15h-15zM4.500 9l4-4.500h7v11h-11zM10 4.500v11M4.500 10.500h11" fill="none" stroke="#000" />
              </svg>
            </button>
            <label htmlFor="xy" className="flex w-[46px] items-center bg-[#ffffcc] pl-[2px] whitespace-pre">
              X Y :
            </label>
            <div className="flex w-[172px] border-2 border-[#ffffcc]">
              <input
                id="xy"
                value={coords}
                onChange={(e) => setCoords(e.target.value)}
                className="w-full border-2 border-t-[#8a8a72] border-r-[#d0d0a0] border-b-[#d0d0a0] border-l-[#8a8a72] bg-[#ffffcc] px-1"
              />
            </div>
            <button type="button" aria-label="Interrupt" className="flex w-[29px] items-center justify-center border-[3px] border-[#55b89f] bg-[#e8e8b8]">
              <svg width="16" height="20" viewBox="0 0 16 20" aria-hidden="true">
                <path d="M0.500 0.500h14v18h-14zM7.500 4v8M7.500 14v2" fill="none" stroke="#000" />
              </svg>
            </button>
            <div className="flex flex-1 items-center bg-[#ffffcc] pl-[3px]">&lt;M1&gt; - Select first area corner</div>
            <div className="flex w-[71px] shrink-0 overflow-hidden bg-[#55ccaf] pt-[2px] pb-[2px] pl-[6px]">
              <button
                type="button"
                className="flex w-[90px] shrink-0 items-center border-2 border-t-[#a5efdb] border-r-[#2f6b5e] border-b-[#2f6b5e] border-l-[#a5efdb] pl-1 text-[15px]"
              >
                MM
                <span className="ml-[26px] block h-[7px] w-3 border-2 border-t-[#a5efdb] border-r-[#2f6b5e] border-b-[#2f6b5e] border-l-[#a5efdb]" />
              </button>
            </div>
          </div>

          {/* Message line */}
          <div className="h-[30px] shrink-0 border-t-2 border-[#6f8080] pt-px">
            <div
              className={clsx(
                MONO,
                'flex h-[26px] items-center justify-center border-t-[3px] border-b-[3px] border-t-[#ccffff] border-b-[#5f9a9a] bg-[#b2ffff] pl-2 text-[12px]'
              )}
            >
              No features was selected
            </div>
          </div>
          <div className="h-[9px] shrink-0 border-t-2 border-b border-t-[#d8fbfb] border-b-white bg-[#7f9fd0]" />
        </main>
      </div>

      <Taskbar />

      <Popview title="Popview - 2" place="left-[126px] top-[182px] h-[474px] w-[511px]">
        <svg width="454" height="402" viewBox="136 214 454 402" role="img" aria-label="Slot detail, left">
          <g fill="none" stroke="#4a9420" strokeWidth="1">
            <path d="M221 248.500h-83.500v11h83.500M518 248.500h72M518 259.500h72" />
            <path d="M220 254v129M232 254v129M506 254v129M518 254v129" strokeWidth="2" />
            <path d="M220.500 381a148.500 150.500 0 0 0 297 0M221.500 385a147 142.500 0 0 0 294 0M232.500 381a136.500 139.500 0 0 0 273 0M232.500 381a136 135.500 0 0 0 272 0" />
            <RoutNode x={226} y={254} cross />
            <RoutNode x={512} y={254} cross />
            <RoutNode x={226} y={381} />
            <RoutNode x={512} y={381} />
          </g>
        </svg>
      </Popview>

      <Popview title="Popview - 1" place="left-[1196px] top-[278px] h-[482px] w-[607px]">
        <svg width="550" height="410" viewBox="1206 310 550 410" role="img" aria-label="Slot detail, right">
          <g fill="none" stroke="#4a9420" strokeWidth="1">
            <path d="M1312 394.500h-105.500v11h105.500M1618 394.500h138M1618 405.500h138" />
            <path d="M1311 401v132M1322 401v132M1607 401v132M1618 401v132" strokeWidth="2" />
            <path d="M1310.500 532a154 154 0 0 0 308 0M1311.500 536a153 146 0 0 0 306 0M1322.500 532a142 143.500 0 0 0 284 0M1322.500 532a142 139 0 0 0 284 0" />
            <RoutNode x={1316} y={401} cross />
            <RoutNode x={1612} y={401} cross />
            <RoutNode x={1316} y={532} />
            <RoutNode x={1612} y={532} />
          </g>
        </svg>
      </Popview>
    </div>
  );
}
